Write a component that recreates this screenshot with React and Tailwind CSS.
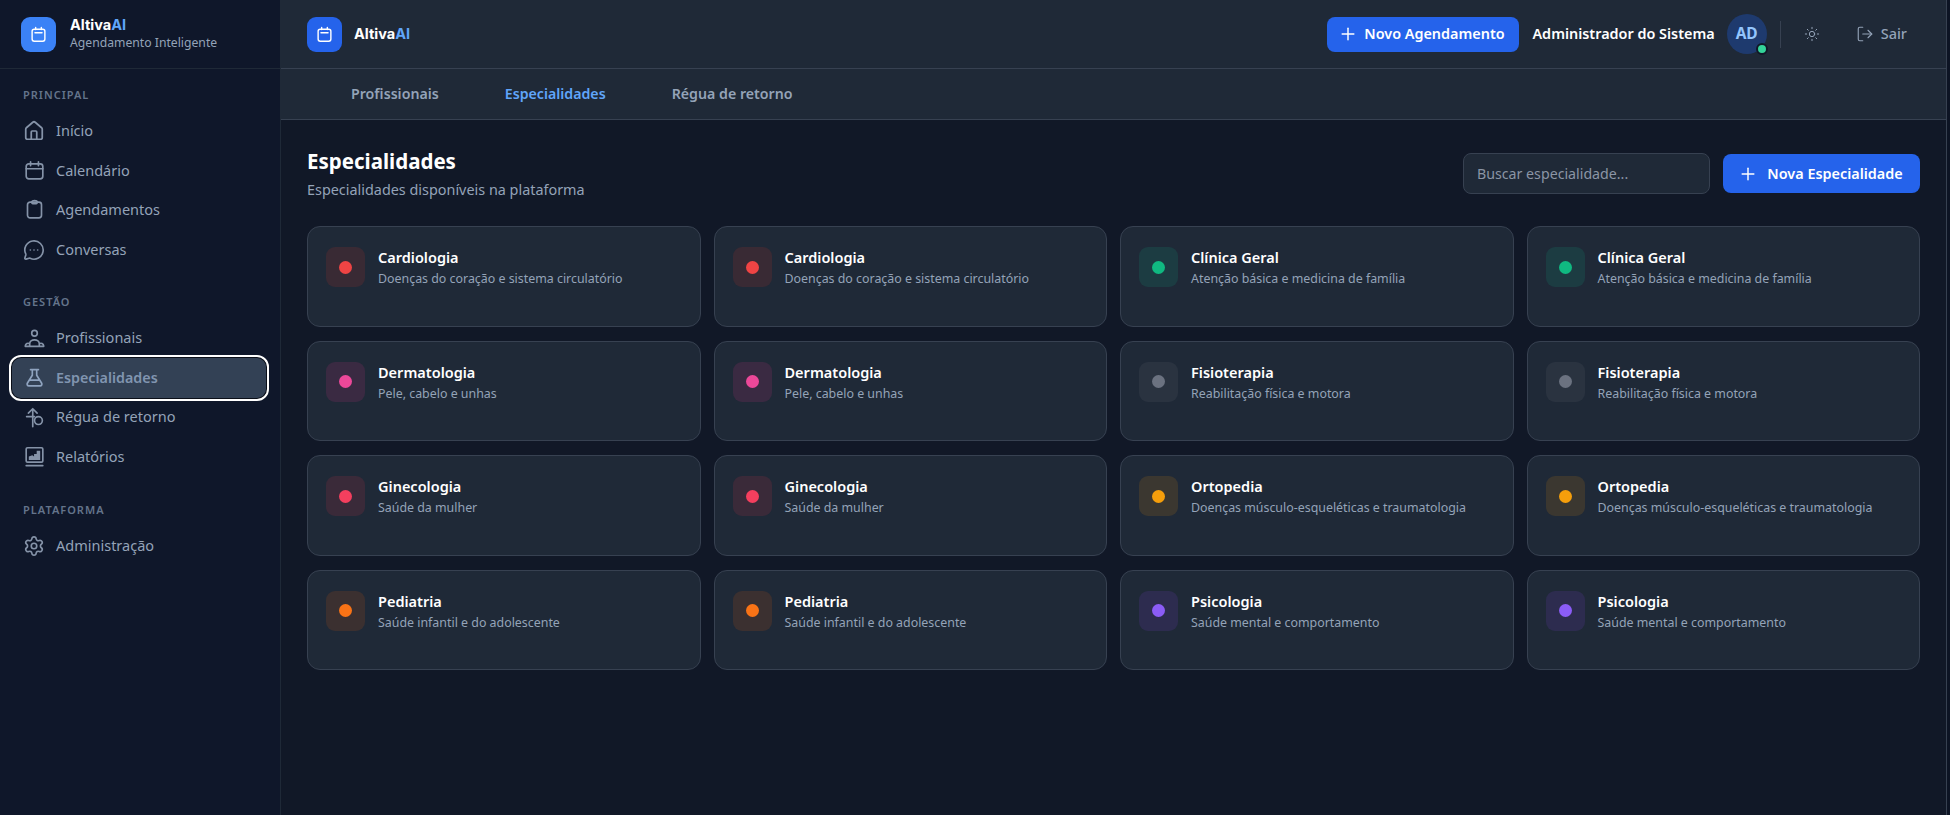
import React from 'react';
import { House, MessageCircleMore, Settings, Plus, Sun, LogOut } from 'lucide-react';

const Svg = ({ children, className = 'w-[21px] h-[21px] shrink-0', strokeWidth = 1.9 }) => (
    <svg viewBox="0 0 24 24" fill="none" stroke="currentColor" strokeWidth={strokeWidth} strokeLinecap="round" strokeLinejoin="round" className={className}>
        {children}
    </svg>
);

const CalendarIcon = () => (
    <Svg>
        <rect x="2.5" y="4.5" width="19" height="17" rx="3" />
        <path d="M7.5 2v4.5M16.5 2v4.5M2.5 10h19" />
    </Svg>
);

const ClipboardIcon = () => (
    <Svg>
        <rect x="4" y="3.5" width="16" height="18" rx="3" />
        <path d="M9 3.5a3 1.8 0 0 1 6 0v.8a1 1 0 0 1-1 1h-4a1 1 0 0 1-1-1z" />
    </Svg>
);

const LogoCalendar = () => (
    <Svg className="w-[17px] h-[17px]" strokeWidth={2}>
        <rect x="3" y="4.5" width="18" height="17" rx="3" />
        <path d="M8 2v3M16 2v3M7 9.5h10" />
    </Svg>
);

const PeopleIcon = () => (
    <Svg>
        <circle cx="12" cy="6" r="3.2" />
        <path d="M6.5 18a5.5 4.5 0 0 1 11 0M1.5 21h21M1.5 21v-.6a3.2 3.2 0 0 1 5-2.4M22.5 21v-.6a3.2 3.2 0 0 0-5-2.4M6.5 18v3M17.5 18v3" />
    </Svg>
);

const FlaskIcon = () => (
    <Svg>
        <path d="M7.5 3h9M9.5 3v6.5L3.8 18.6A2 2 0 0 0 5.5 21.6h13a2 2 0 0 0 1.7-3L14.5 9.5V3M6.5 15h11" />
    </Svg>
);

const RulerIcon = () => (
    <Svg>
        <path d="M10 22.5V2M5 7l5-5 5 5M3 11h9" />
        <circle cx="16.5" cy="15.5" r="4.5" />
    </Svg>
);

const ReportIcon = () => (
    <Svg>
        <rect x="2.5" y="2" width="19" height="16.5" rx="1.5" />
        <path d="M2.5 22.5h19" />
        <path d="M5.5 16v-4l4-1.5 2 1.5V9h3V5.5h4V16z" fill="currentColor" stroke="none" />
    </Svg>
);

const menu = [
    { label: 'PRINCIPAL', className: 'mt-[19px]', items: [
        { icon: <House size={22} strokeWidth={1.9} className="shrink-0" />, text: 'Início' },
        { icon: <CalendarIcon />, text: 'Calendário' },
        { icon: <ClipboardIcon />, text: 'Agendamentos' },
        { icon: <MessageCircleMore size={22} strokeWidth={1.8} className="shrink-0" />, text: 'Conversas' },
    ] },
    { label: 'GESTÃO', className: 'mt-[26px]', items: [
        { icon: <PeopleIcon />, text: 'Profissionais' },
        { icon: <FlaskIcon />, text: 'Especialidades', active: true },
        { icon: <RulerIcon />, text: 'Régua de retorno' },
        { icon: <ReportIcon />, text: 'Relatórios' },
    ] },
    { label: 'PLATAFORMA', className: 'mt-[26px]', items: [
        { icon: <Settings size={22} strokeWidth={1.8} className="shrink-0" />, text: 'Administração' },
    ] },
];

const specialties = [
    { name: 'Cardiologia', desc: 'Doenças do coração e sistema circulatório', tile: 'bg-[#392a34]', dot: 'bg-[#ef4444]' },
    { name: 'Clínica Geral', desc: 'Atenção básica e medicina de família', tile: 'bg-[#1c3c42]', dot: 'bg-[#10b981]' },
    { name: 'Dermatologia', desc: 'Pele, cabelo e unhas', tile: 'bg-[#3a2a42]', dot: 'bg-[#ec4899]' },
    { name: 'Fisioterapia', desc: 'Reabilitação física e motora', tile: 'bg-[#2a3340]', dot: 'bg-[#6b7280]' },
    { name: 'Ginecologia', desc: 'Saúde da mulher', tile: 'bg-[#3a2a39]', dot: 'bg-[#f43f5e]' },
    { name: 'Ortopedia', desc: 'Doenças músculo-esqueléticas e traumatologia', tile: 'bg-[#3b3730]', dot: 'bg-[#f59e0b]' },
    { name: 'Pediatria', desc: 'Saúde infantil e do adolescente', tile: 'bg-[#3b3030]', dot: 'bg-[#f97316]' },
    { name: 'Psicologia', desc: 'Saúde mental e comportamento', tile: 'bg-[#2d2c4f]', dot: 'bg-[#8b5cf6]' },
];

// each specialty shows up twice in the list
const cards = specialties.flatMap((s) => [s, s]);

const Sidebar = () => (
    <aside className="w-[281px] shrink-0 bg-[#0f172a] border-r border-[#1f2937] flex flex-col">
        <div className="h-[69px] shrink-0 border-b border-[#1f2937] flex items-center pl-[21px] gap-[14px]">
            <div className="w-[35px] h-[35px] rounded-[9px] bg-[#3b82f6] text-white flex items-center justify-center">
                <LogoCalendar />
            </div>
            <div>
                <div className="text-[14.5px] leading-[18px] font-bold text-white font-['Inter',sans-serif]">Altiva<span className="text-[#60a5fa]">AI</span></div>
                <div className="text-[12.2px] leading-[18px] text-[#94a3b8]">Agendamento Inteligente</div>
            </div>
        </div>
        {menu.map((section) => (
            <div key={section.label} className={section.className}>
                <div className="pl-[23px] text-[11px] leading-[14px] font-semibold tracking-[1px] text-[#64748b] mb-[9px]">{section.label}</div>
                <div className="flex flex-col">
                    {section.items.map((item) => (
                        <div
                            key={item.text}
                            className={`h-[39.6px] ml-[12px] mr-[14px] pl-[13px] flex items-center gap-[13px] rounded-[9px] ${item.active ? 'bg-[#334155] text-[#8195b0] text-[14.3px] font-semibold ring-[1.5px] ring-[#0b0f19] outline-2 outline-offset-[1.5px] outline-white' : 'text-[14.5px] text-[#94a3b8]'}`}
                        >
                            <span className={`w-[18px] h-[18px] flex items-center justify-center ${item.active ? 'text-[#8fa3bf]' : 'text-[#8593a8]'}`}>{item.icon}</span>
                            {item.text}
                        </div>
                    ))}
                </div>
            </div>
        ))}
    </aside>
);

const Topbar = () => (
    <header className="h-[69px] shrink-0 bg-[#1f2937] border-b border-[#374151] flex items-center pl-[26px] pr-[39px]">
        <div className="w-[35px] h-[35px] rounded-[9px] bg-[#2563eb] text-white flex items-center justify-center">
            <LogoCalendar />
        </div>
        <div className="ml-[12px] text-[14.5px] font-bold text-white font-['Inter',sans-serif]">Altiva<span className="text-[#60a5fa]">AI</span></div>
        <div className="ml-auto flex items-center">
            <button className="w-[192px] h-[35px] rounded-[8px] bg-[#2563eb] text-white text-[14.4px] font-semibold flex items-center justify-center gap-[6px] pr-[4px]">
                <Plus size={20} strokeWidth={1.75} />
                Novo Agendamento
            </button>
            <span className="ml-[13px] text-[14.4px] font-semibold text-white">Administrador do Sistema</span>
            <div className="relative ml-[12px] w-[40px] h-[40px] rounded-full bg-[#1e3a6e] text-[#93c5fd] text-[15.5px] font-bold flex items-center justify-center">
                AD
                <span className="absolute right-[-1px] bottom-[-1px] w-[12px] h-[12px] rounded-full bg-[#34d399] border-[2px] border-[#111827]"></span>
            </div>
            <div className="ml-[13px] w-px h-[27px] bg-[#374151]"></div>
            <Sun size={16} strokeWidth={1.5} className="ml-[23px] text-[#94a3b8]" />
            <div className="ml-[36px] flex items-center gap-[7px] text-[14.5px] font-medium text-[#94a3b8]">
                <LogOut size={18} strokeWidth={1.5} />
                Sair
            </div>
        </div>
    </header>
);

const Tabs = () => (
    <nav className="h-[51px] shrink-0 bg-[#1f2937] border-b border-[#374151] flex items-center pl-[70px] gap-[66px] text-[14.2px] font-semibold text-[#94a3b8]">
        <span>Profissionais</span>
        <span className="text-[#60a5fa]">Especialidades</span>
        <span>Régua de retorno</span>
    </nav>
);

const Card = ({ item }) => (
    <div className="bg-[#1f2937] border border-[#374151] rounded-[13px] pl-[18px] pt-[20px] flex gap-[13px]">
        <div className={`w-[39px] h-[40px] shrink-0 rounded-[9px] flex items-center justify-center ${item.tile}`}>
            <span className={`w-[13px] h-[13px] rounded-full ${item.dot}`}></span>
        </div>
        <div>
            <div className="text-[14.5px] leading-[20px] font-semibold text-white">{item.name}</div>
            <div className="mt-[2px] text-[12.4px] leading-[20px] text-[#94a3b8]">{item.desc}</div>
        </div>
    </div>
);

const App = () => {
    return (
        <div className="h-screen flex overflow-hidden bg-[#0d1424] font-['Noto_Sans',sans-serif]">
            <Sidebar />
            <div className="flex-1 min-w-0 flex flex-col mr-[3px] bg-[#111827] border-r border-[#374151]">
                <Topbar />
                <Tabs />
                <main className="px-[26px] pt-[26px]">
                    <div className="flex items-center justify-between">
                        <div>
                            <h1 className="text-[20.5px] leading-[30px] font-bold text-white">Especialidades</h1>
                            <p className="mt-[3px] text-[14.4px] leading-[22px] text-[#94a3b8]">Especialidades disponíveis na plataforma</p>
                        </div>
                        <div className="flex items-center gap-[13px]">
                            <input
                                placeholder="Buscar especialidade..."
                                className="w-[247px] h-[41px] px-[13px] rounded-[8px] bg-[#1f2937] border border-[#374151] text-[14.2px] placeholder:text-[#8b95a5] outline-none"
                            />
                            <button className="w-[197px] h-[39px] rounded-[8px] bg-[#2563eb] text-white text-[14.4px] font-semibold flex items-center justify-center gap-[9px] pr-[2px]">
                                <Plus size={20} strokeWidth={1.75} />
                                Nova Especialidade
                            </button>
                        </div>
                    </div>
                    <div className="mt-[25px] grid grid-cols-4 gap-x-[13px] gap-y-[14px] auto-rows-[100.5px]">
                        {cards.map((item, index) => (
                            <Card key={index} item={item} />
                        ))}
                    </div>
                </main>
            </div>
        </div>
    );
};

export default App;
